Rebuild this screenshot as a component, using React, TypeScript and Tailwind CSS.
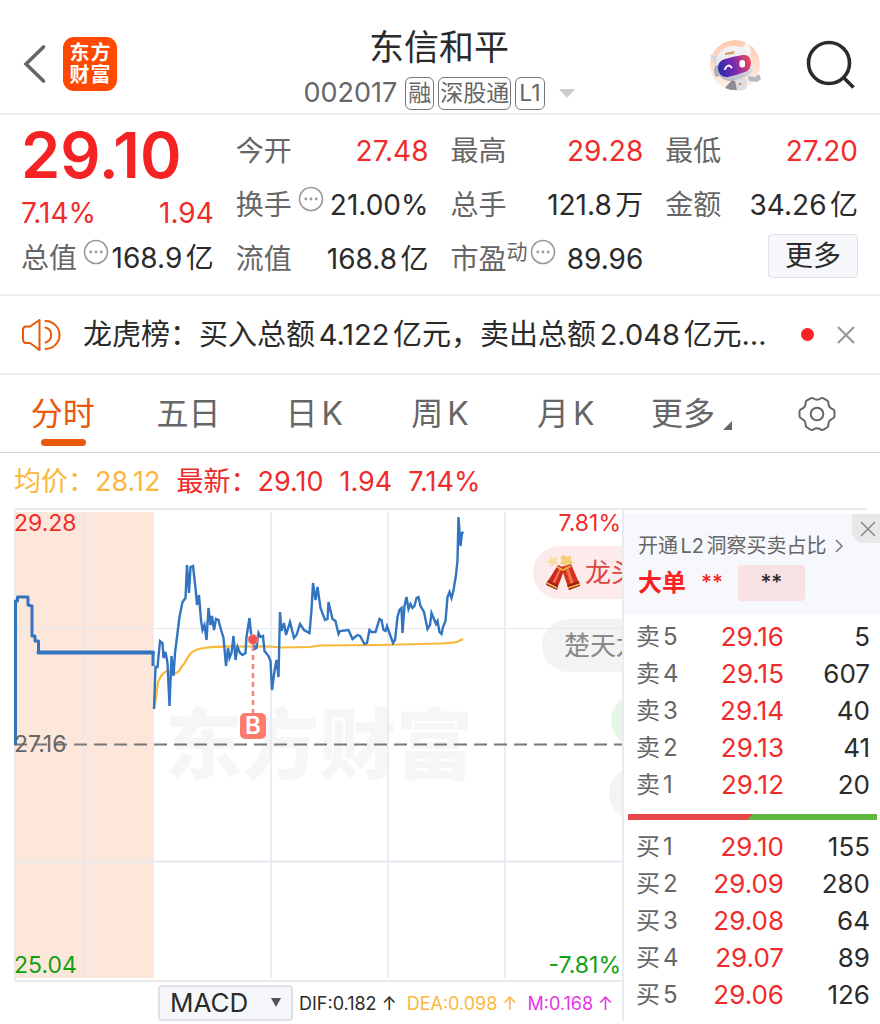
import React from "react";

const SELLS: [string, string, string][] = [
  ["卖5", "29.16", "5"],
  ["卖4", "29.15", "607"],
  ["卖3", "29.14", "40"],
  ["卖2", "29.13", "41"],
  ["卖1", "29.12", "20"],
];

const BUYS: [string, string, string][] = [
  ["买1", "29.10", "155"],
  ["买2", "29.09", "280"],
  ["买3", "29.08", "64"],
  ["买4", "29.07", "89"],
  ["买5", "29.06", "126"],
];

const TABS = ["五日", "日K", "周K", "月K"];

const AUCTION =
  "15.5,745 15.5,601 17.5,601 17.5,597 28,597 28,605 32,606 32,636 35,636 35,641 38.5,641 38.5,652.5 153,652.5 153,666";

const PRICE =
  "154,709 155.5,667 157.5,667 160,641 162.5,643 163.5,658 165.5,652 167.5,663 169.5,706 171.5,656 173.5,676 175,653 177.5,633 179.5,617 182.5,602 185.5,598 187,565 189,593 190.5,567 193,566 195.5,588 197,605 199,595 201,620 202.5,630 204.5,625 206.5,640 208.5,608 210.5,625 212,616 214,630 216,619 218.5,620 220.5,628 223.5,638 226,666 228,648 229.5,658 231.5,653 233.5,636 235.5,660 237.5,647 240,653 242.5,655 245.5,653 246.5,637 249.5,618 251,633 253,640 254.5,649 256.5,648 258.5,633 260.5,637 263,636 264.5,651 268.5,656 270.5,661 272,690 274.5,671 276.5,660 278.5,677 280,612 281.5,631 284,623 286,635 290,622 294,638 296.5,635 300,624 304,630 309.5,633 311.5,610 313,583 315.5,600 317.5,587 320.5,608 325,620 327.5,619 328.5,602 332.5,619 335.5,621 338.5,634 340,631 348.5,630 352.5,639 357.5,635 360,636 364.5,644 367,643 369.5,630 371.5,632 375.5,632 379.5,619 381.5,620 383.5,630 385.5,631 387,626 393,643 395,640 397.5,617 399.5,610 401.5,608 402.5,633 404.5,606 406.5,597 408.5,609 410.5,604 412.5,608 414.5,606 416.5,598 418.5,597 420.5,606 424,612 427.5,629 430,625 431.5,613 436,624 437.5,621 439.5,632 441.5,634 443,627 445.5,621 447.5,597 449.5,592 451.5,598 453.5,590 456,575 457.5,560 458.5,517 460.5,546 462,533 463.5,532";

const AVERAGE =
  "M154 709 L156 697 L158 682 L161 676 Q164 672 167 671 L170 672 Q175 675 179 671 L182 666 L184 664 L190 654 Q195 649 204 648 Q215 646 240 646.5 L270 646.5 L280 647.5 L310 647 L320 645.5 L380 645 L440 643.5 Q452 643 457 642 L463 639";

function MoreDots() {
  return (
    <svg viewBox="0 0 26 26" className="size-[26px] shrink-0" fill="none" aria-hidden="true">
      <circle cx="13" cy="13" r="11.5" stroke="#999" strokeWidth="1.6" />
      <circle cx="7.8" cy="13" r="1.4" fill="#999" />
      <circle cx="13" cy="13" r="1.4" fill="#999" />
      <circle cx="18.2" cy="13" r="1.4" fill="#999" />
    </svg>
  );
}

function Stat({ label, value, up, note }: { label: string; value: string; up?: boolean; note?: React.ReactNode }) {
  return (
    <div className="flex h-[54px] items-center justify-between whitespace-nowrap">
      <dt className="flex items-center text-[#666]">
        {label}
        {note}
      </dt>
      <dd className={up ? "text-[#ef2b2b]" : "text-[#2b2b2b]"}>{value}</dd>
    </div>
  );
}

function Robot() {
  return (
    <svg viewBox="0 0 52 52" className="size-[52px]" aria-hidden="true">
      <defs>
        <linearGradient id="visor" x1="0" y1="0.6" x2="1" y2="0.4">
          <stop offset="0" stopColor="#2b2aa6" />
          <stop offset="0.5" stopColor="#7d2bb4" />
          <stop offset="1" stopColor="#ea4758" />
        </linearGradient>
        <linearGradient id="halo" x1="0" y1="0" x2="0" y2="1">
          <stop offset="0" stopColor="#ffc9ae" />
          <stop offset="1" stopColor="#fff2ea" />
        </linearGradient>
        <linearGradient id="shell" x1="0" y1="0" x2="0" y2="1">
          <stop offset="0" stopColor="#f6f5f6" />
          <stop offset="0.6" stopColor="#e4e4ea" />
          <stop offset="1" stopColor="#b4b5c2" />
        </linearGradient>
      </defs>
      <circle cx="26" cy="26" r="25" fill="url(#halo)" />
      <path d="M22 39 H37 Q39 45 37 50 Q30 53 23 50Z" fill="#dcdce2" />
      <path d="M16 49 L23 41 L26 42 L28 51 H22Z" fill="#908b93" />
      <path d="M39 37 L46 38 L50 35 L52 40 L48 43 L40 42Z" fill="#b4b8c2" />
      <path d="M1 15 Q5 19 10 16 L9 27 Q3 25 1 15Z" fill="#d6d6dc" />
      <path d="M31 8 Q37 9 36 2 Q44 8 41 19Z" fill="#f8f7f8" />
      <path d="M7 28 Q6 13 18 8 Q33 4 40 15 Q47 27 42 34 Q38 38 22 42 Q9 42 7 28Z" fill="url(#shell)" />
      <ellipse cx="8" cy="32" rx="3" ry="6" fill="#aeb0bd" />
      <path d="M9 29 Q9 22 16 20 Q26 17 34 16 Q41 15 42 23 Q42 31 36 33 Q28 36 19 38 Q10 39 9 29Z" fill="url(#visor)" />
      <path d="M16 30 Q19 24 22.500 28.500" stroke="#fff" strokeWidth="2" fill="none" strokeLinecap="round" />
      <rect x="30.500" y="21" width="5.500" height="7.500" rx="2.500" fill="#fff" />
      <path d="M16 14 L26 12 L24 15 L16 16Z" fill="#dd9a5c" />
      <circle cx="31" cy="45" r="1.300" fill="#d98a58" />
    </svg>
  );
}

function Firecracker() {
  return (
    <svg viewBox="0 0 36 36" className="size-[36px] shrink-0" aria-hidden="true">
      <path d="M5 1 L8 4 L12 2 L11 6 L14 9 L9 9 L6 12 L5 8 L1 7 L5 5Z" fill="#f7dca0" />
      <path d="M19 0 L22 2 L26 1 L26 5 L29 8 L24 9 L20 10 L15 9 L17 5 L15 2Z" fill="#f5cf7a" />
      <path d="M13 10 L20 13 L12 34 L1 29Z" fill="#c9281c" />
      <path d="M15 12 L17 13 L9 31 L6 30Z" fill="#f06a45" />
      <path d="M16 12 L26 9 L35 30 L24 35Z" fill="#d6301e" />
      <path d="M20 12 L23 11 L30 31 L27 33Z" fill="#f4734a" />
      <path d="M3 25 L13 30 L12 35 L1 30Z" fill="#9c1f18" />
      <path d="M22 30 L34 26 L35 31 L24 35Z" fill="#9c1f18" />
      <path d="M2 28 L12 33 M23 33 L35 29 M12 12 L18 15 L26 11" stroke="#f0b440" strokeWidth="1.6" fill="none" />
    </svg>
  );
}

function BookRows({ rows, side }: { rows: [string, string, string][]; side: string }) {
  return (
    <table className="w-full table-fixed text-[26px]" aria-label={side}>
      <tbody>
        {rows.map(([name, price, volume]) => (
          <tr key={name} className="h-[37px] leading-[37px]">
            <th scope="row" className="w-[72px] p-0 pl-3 text-left text-[24px] font-normal whitespace-nowrap text-[#666]">
              {name}
            </th>
            <td className="p-0 text-right text-[#ef2b2b]">{price}</td>
            <td className="w-[96px] p-0 pr-[10px] text-right text-[#2b2b2b]">{volume}</td>
          </tr>
        ))}
      </tbody>
    </table>
  );
}

export default function App() {
  return (
    <div
      lang="zh-CN"
      className="min-h-screen overflow-hidden bg-white font-['Inter','Noto_Sans_CJK_SC',sans-serif] text-[#2b2b2b] [text-autospace:normal]"
    >
      <header className="flex h-[115px] items-center justify-between border-b-2 border-[#eee] pr-6 pl-[22px]">
        <div className="flex flex-1 items-center gap-4 pt-[14px]">
          <button type="button" aria-label="返回">
            <svg viewBox="0 0 25 40" className="h-10 w-[25px]" fill="none" stroke="#666" strokeWidth="3.6" strokeLinecap="round">
              <path d="M21.500 3 L4 20 L21.500 37" strokeLinejoin="miter" />
            </svg>
          </button>
          <div className="grid size-[54px] grid-cols-2 place-content-center justify-items-center rounded-[11px] bg-[#ff4800] px-[6px] text-[20px] leading-[22px] font-bold text-white">
            <span>东</span>
            <span>方</span>
            <span>财</span>
            <span>富</span>
          </div>
        </div>
        <div className="flex flex-col items-center self-start pt-6">
          <h1 className="text-[35px] leading-[46px]">东信和平</h1>
          <button type="button" className="flex h-[46px] items-center gap-1 text-[27px] leading-[40px] text-[#666]">
            <span className="pr-1">002017</span>
            <span className="rounded-md border-[1.5px] border-[#777] px-[2px] text-[23px] leading-[31px]">融</span>
            <span className="rounded-md border-[1.5px] border-[#777] px-[1px] text-[23px] leading-[31px]">深股通</span>
            <span className="rounded-md border-[1.5px] border-[#777] px-[3px] text-[23px] leading-[31px]">L1</span>
            <svg viewBox="0 0 16 9" className="ml-[10px] h-[9px] w-4" aria-hidden="true">
              <path d="M0 0H16L8 9Z" fill="#ccc" />
            </svg>
          </button>
        </div>
        <div className="flex flex-1 items-center justify-end gap-[45px] pt-4">
          <button type="button" aria-label="智能助手">
            <Robot />
          </button>
          <button type="button" aria-label="搜索">
            <svg viewBox="0 0 50 50" className="size-[50px]" fill="none" stroke="#2b2b2b" strokeWidth="3.6">
              <circle cx="23" cy="23" r="20.500" />
              <path d="M37 37 L47.500 47.500" />
            </svg>
          </button>
        </div>
      </header>

      <section className="grid h-[181px] grid-cols-4 gap-x-[22px] border-b-2 border-[#eee] pt-[9px] pr-[22px] pl-[21px] text-[28px] leading-9" aria-label="行情">
        <dl>
          <div className="h-[63px] text-[63px] leading-[62px] font-semibold text-[#f52323]">29.10</div>
          <div className="flex h-11 items-end justify-between text-[#ef2b2b]">
            <span>7.14%</span>
            <span>1.94</span>
          </div>
          <Stat label="总值" value="168.9亿" note={<span className="-mr-2 pb-3 pl-[6px]"><MoreDots /></span>} />
        </dl>
        <dl>
          <Stat label="今开" value="27.48" up />
          <Stat label="换手" value="21.00%" note={<span className="pb-3 pl-[6px]"><MoreDots /></span>} />
          <Stat label="流值" value="168.8亿" />
        </dl>
        <dl>
          <Stat label="最高" value="29.28" up />
          <Stat label="总手" value="121.8万" />
          <Stat
            label="市盈"
            value="89.96"
            note={
              <span className="flex items-center gap-[2px] pb-[14px]">
                <span className="text-[21px] leading-6">动</span>
                <MoreDots />
              </span>
            }
          />
        </dl>
        <dl>
          <Stat label="最低" value="27.20" up />
          <Stat label="金额" value="34.26亿" />
          <div className="flex h-12 items-center justify-end">
            <button type="button" className="h-11 w-[90px] rounded border-[1.5px] border-[#dfe1e8] bg-[#f6f7fa] text-[28px] leading-none">
              更多
            </button>
          </div>
        </dl>
      </section>

      <section className="flex h-[79px] items-center border-b-2 border-[#eee] pr-6 pl-[21px]" aria-label="公告">
        <svg viewBox="0 0 40 34" className="mr-[22px] h-[34px] w-10 shrink-0" fill="none" stroke="#e8590c" strokeWidth="2" strokeLinejoin="round" strokeLinecap="round">
          <path d="M18.500 2 L9 8.500 H5 Q2 8.500 2 12 V21 Q2 25 5 25 H9 L18.500 32Z" />
          <path d="M24.500 3 A14 14 0 0 1 24.500 31" />
          <path d="M24.500 9.500 A7.800 7.800 0 0 1 24.500 24.500" />
        </svg>
        <p className="min-w-0 flex-1 truncate text-[29px] leading-10">龙虎榜：买入总额4.122亿元，卖出总额2.048亿元…</p>
        <span className="mr-[22px] ml-3 size-[13px] shrink-0 rounded-full bg-[#f52323]" />
        <button type="button" aria-label="关闭公告">
          <svg viewBox="0 0 20 20" className="size-5" stroke="#999" strokeWidth="2.2">
            <path d="M2 2 L18 18 M18 2 L2 18" />
          </svg>
        </button>
      </section>

      <nav className="grid h-[78px] grid-cols-7 items-center justify-items-center border-b border-[#cfd3da] text-[32px] leading-[44px] text-[#666]">
        <button type="button" className="relative text-[#e8590c]">
          分时
          <span className="absolute -bottom-[10px] left-[10px] h-[7px] w-[45px] rounded-full bg-[#e8590c]" />
        </button>
        {TABS.map((tab) => (
          <button type="button" key={tab}>
            {tab}
          </button>
        ))}
        <button type="button" className="flex items-end gap-2">
          更多
          <svg viewBox="0 0 9 9" className="mb-[6px] size-[9px]" aria-hidden="true">
            <path d="M9 0V9H0Z" fill="#666" />
          </svg>
        </button>
        <button type="button" aria-label="设置">
          <svg viewBox="0 0 38 36" className="h-9 w-[38px]" fill="none" stroke="#666" strokeWidth="2">
            <path
              strokeLinejoin="round"
              d="M12.500 2.300 Q14 1.500 15.500 2.500 Q19 5 22.500 2.500 Q24 1.500 25.500 2.300 L29 4.300 Q30.500 5.200 30.400 7 Q30.300 11.300 34.500 13 Q36.500 13.800 36.500 15.500 V20 Q36.500 21.800 34.500 22.700 Q30.300 24.500 30.400 28.800 Q30.500 30.600 29 31.500 L25.500 33.600 Q24 34.400 22.500 33.400 Q19 31 15.500 33.400 Q14 34.400 12.500 33.600 L9 31.500 Q7.500 30.600 7.600 28.800 Q7.700 24.500 3.500 22.700 Q1.500 21.800 1.500 20 V15.500 Q1.500 13.800 3.500 13 Q7.700 11.300 7.600 7 Q7.500 5.200 9 4.300Z"
            />
            <circle cx="19" cy="18" r="6.300" />
          </svg>
        </button>
      </nav>

      <div className="flex h-[55px] items-center gap-4 px-[14px] pt-1 text-[27px] whitespace-nowrap text-[#ef2b2b]">
        <span className="text-[#fbb73c]">均价：28.12</span>
        <span>最新：29.10</span>
        <span>1.94</span>
        <span>7.14%</span>
      </div>

      <main className="flex">
        <div className="min-w-0 flex-1 pl-[14px]">
          <div className="relative overflow-hidden border-y-2 border-[#ebebeb]">
            <div className="absolute top-[185px] left-[151px] text-[77px] leading-[100px] font-black whitespace-nowrap text-[#f6f6f6]">东方财富</div>
            <div className="absolute top-9 left-[519px] flex h-[53px] w-[170px] items-center gap-1 rounded-full bg-[#fdeaea] pl-3 text-[26px] whitespace-nowrap text-[#dd4444]">
              <Firecracker />
              龙头
            </div>
            <div className="absolute top-[109px] left-[528px] flex h-[53px] w-[170px] items-center rounded-full bg-[#f3f3f3] pl-[22px] text-[26px] whitespace-nowrap text-[#888]">
              楚天龙
            </div>
            <div className="absolute top-[184px] left-[597px] h-[53px] w-[120px] rounded-full bg-[#e6f6e6]" />
            <div className="absolute top-[257px] left-[595px] h-[53px] w-[120px] rounded-full bg-[#f3f3f3]" />
            <svg viewBox="14 510 608 470" preserveAspectRatio="none" className="relative h-[470px] w-full" fill="none" aria-label="分时走势">
              <rect x="14" y="512" width="140" height="466" fill="#fce7da" />
              <g stroke="#e6e8f0" strokeWidth="2">
                <path d="M14.500 510V980" />
                <path d="M84 512V978 M271 512V978 M388 512V978 M505 512V978" strokeWidth="1.500" />
                <path d="M14 628.500H622" strokeWidth="1" />
                <path d="M14 861.500H622" />
              </g>
              <path d="M14 744.500H622" stroke="#777" strokeWidth="1.800" strokeDasharray="13 7" />
              <path d={AVERAGE} stroke="#f8b83a" strokeWidth="2.200" />
              <polyline points={AUCTION} stroke="#3274c0" strokeWidth="3" strokeLinejoin="round" />
              <path d="M38.500 652.500H153" stroke="#3274c0" strokeWidth="4" strokeLinecap="round" />
              <polyline points={PRICE} stroke="#3274c0" strokeWidth="2.400" strokeLinejoin="miter" />
              <path d="M253 646V713" stroke="#f2857c" strokeWidth="2.500" strokeDasharray="5 4" />
              <circle cx="253" cy="639.500" r="5" fill="#ee5350" stroke="#f7a29c" strokeWidth="1" />
            </svg>
            <span className="absolute top-[203px] left-[226px] flex size-[26px] items-center justify-center rounded-[5px] bg-[#fd7c6e] text-[24px] font-semibold text-white">
              B
            </span>
            <div className="absolute inset-0 flex flex-col justify-between text-[23px] leading-[26px]">
              <div className="flex justify-between pr-[1px] text-[#ef2b2b]">
                <span>29.28</span>
                <span>7.81%</span>
              </div>
              <div className="text-[#666]">27.16</div>
              <div className="flex justify-between pr-[1px] pb-[2px] text-[#10a010]">
                <span>25.04</span>
                <span>-7.81%</span>
              </div>
            </div>
          </div>
          <div className="flex items-center gap-[10px] pt-[3px] pl-36 text-[18px] whitespace-nowrap">
            <label className="relative -mr-1 block">
              <select
                aria-label="指标"
                defaultValue="MACD"
                className="h-9 w-[135px] appearance-none rounded border-2 border-[#dfe1e8] bg-[#f6f7fa] pl-[10px] text-[26px] leading-8 text-[#2b2b2b]"
              >
                <option>MACD</option>
                <option>KDJ</option>
              </select>
              <svg viewBox="0 0 10 9" className="pointer-events-none absolute top-[13px] right-3 h-[9px] w-[10px]">
                <path d="M0 0H10L5 9Z" fill="#555" />
              </svg>
            </label>
            <span>DIF:0.182 ↑</span>
            <span className="text-[#fbb73c]">DEA:0.098 ↑</span>
            <span className="text-[#e535e5]">M:0.168 ↑</span>
          </div>
        </div>

        <aside className="w-[258px] shrink-0 border-l-2 border-[#e9ebf0]">
          <div className="mr-[13px] h-[6px] border-t-2 border-[#ebebeb]" />
          <div className="relative h-[100px] bg-[#f7f8fb] pt-[18px] pl-[14px]">
            <a href="#l2" className="flex items-center gap-2 text-[20px] leading-7 whitespace-nowrap text-[#666]">
              开通L2洞察买卖占比
              <svg viewBox="0 0 8 14" className="h-[14px] w-2" fill="none" stroke="#777" strokeWidth="1.500">
                <path d="M1 1 L7 7 L1 13" />
              </svg>
            </a>
            <div className="flex items-center gap-[15px] pt-[5px] font-medium">
              <span className="text-[24px] font-semibold text-[#f52323]">大单</span>
              <span className="text-[21px] text-[#f52323]">**</span>
              <span className="flex h-9 w-[67px] items-center justify-center rounded-sm bg-[#f7e1e4] text-[21px]">**</span>
            </div>
            <button type="button" aria-label="关闭" className="absolute top-0 right-0 flex h-[29px] w-7 items-center justify-center rounded-bl-xl bg-[#e7e8ea] pl-1">
              <svg viewBox="0 0 16 16" className="size-4" stroke="#888" strokeWidth="1.500">
                <path d="M1 1 L15 15 M15 1 L1 15" />
              </svg>
            </button>
          </div>
          <div className="pt-1">
            <BookRows rows={SELLS} side="卖盘" />
          </div>
          <div className="mt-[11px] mr-[3px] mb-2 ml-1 h-[6px] bg-[#5cb83f]">
            <div className="h-full w-1/2 bg-[#e9484a] [clip-path:polygon(0_0,100%_0,96%_100%,0_100%)]" />
          </div>
          <BookRows rows={BUYS} side="买盘" />
        </aside>
      </main>
    </div>
  );
}
